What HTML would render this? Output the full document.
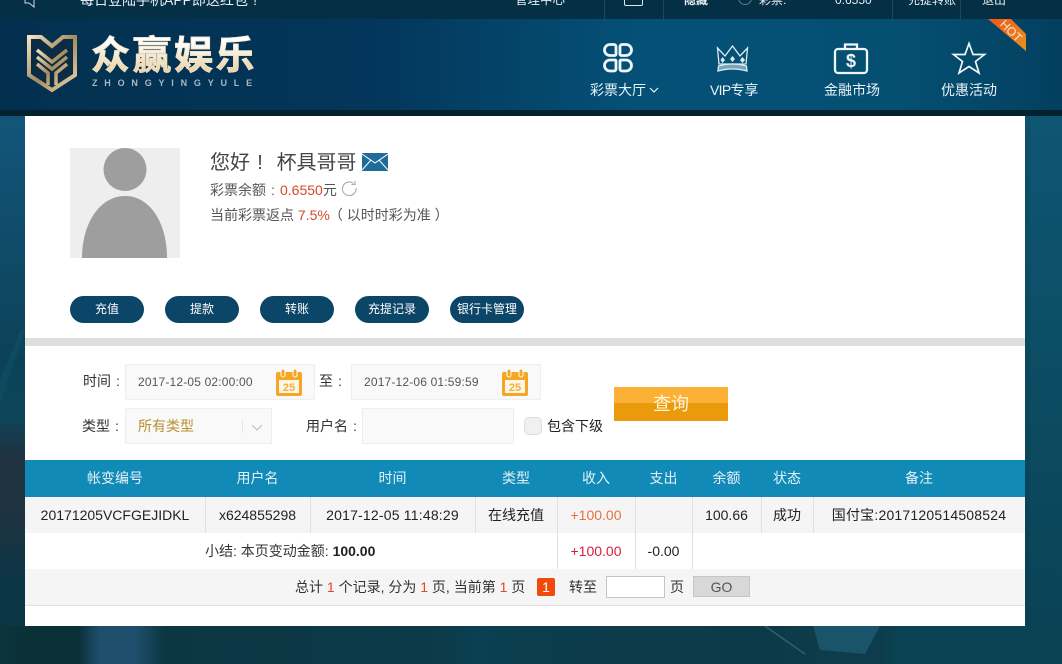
<!DOCTYPE html>
<html lang="zh"><head><meta charset="utf-8"><title>众赢娱乐</title>
<style>
*{box-sizing:border-box}
html,body{margin:0;padding:0;width:1062px;height:664px;overflow:hidden;background:#0a3d4f}
body{position:relative;font-family:"Liberation Sans","Noto Sans CJK SC",sans-serif;font-size:14px;color:#333}
.a{position:absolute;white-space:nowrap}
i.k{font-style:normal;display:inline-block;width:14px;text-align:center}
.btn{position:absolute;top:296px;width:74px;height:27px;border-radius:14px;background:#0b4568;color:#fff;font-size:12px;line-height:27px;text-align:center}
.inp{position:absolute;background:#f9f9f9;border:1px solid #eee}
.cell{position:absolute;text-align:center;white-space:nowrap;font-size:14px;color:#222;line-height:36px}
.th{position:absolute;top:460px;height:37px;line-height:37px;text-align:center;color:#e4f2f8;font-size:14px}
.ln{position:absolute;width:1px;background:#e0e0e0}
.nav{position:absolute;top:81px;color:#eaf4f9;font-size:14px;line-height:18px;text-align:center;white-space:nowrap}
.top{position:absolute;top:-9px;color:#e8eef2;font-size:14px;line-height:18px;white-space:nowrap}
.sep{position:absolute;top:0;width:1px;height:19px;background:#1b4a5f}
.lb{position:absolute;font-size:14px;line-height:18px;color:#333;white-space:nowrap}
</style></head><body>
<!-- background -->
<div class="a" style="left:0;top:116px;width:1062px;height:548px;background:linear-gradient(180deg,#0e5674 0%,#0c4c62 50%,#0a4155 100%)"></div>
<div class="a" style="left:1025px;top:116px;width:5px;height:510px;background:rgba(5,40,55,.12)"></div>
<div class="a" style="left:0;top:116px;width:25px;height:548px;background:linear-gradient(180deg,#13557a 0%,#0c4258 45%,#0d4558 55%,#1f3341 62%,#1f3341 72%,#0c3645 85%,#0b3543 100%)"></div>
<svg class="a" style="left:0;top:330px" width="25" height="130"><path d="M25 0L0 75V50L25 -10Z" fill="#155c72" opacity=".3"/></svg>
<div class="a" style="left:0;top:626px;width:1062px;height:38px;background:linear-gradient(90deg,#0b3540 0,#0a3038 25px,#0a3038 78px,#1f4f6d 100px,#1f4f6d 135px,#0b3742 165px,#0c3a48 430px,#0b3f52 480px,#0b3d4c 530px,#0d3a48 760px,#0d3d4c 880px,#0b4355 900px,#0b4355 1062px)"></div>
<svg class="a" style="left:0;top:626px" width="1062" height="38">
<path d="M813 0H880L865 28L820 24Z" fill="#1e5a72" opacity=".8"/>
<path d="M765 0L805 28" stroke="#2f6266" stroke-width="1.500"/></svg>
<!-- top bar -->
<div class="a" style="left:0;top:0;width:1062px;height:19px;background:#052f45"></div>
<svg class="a" style="left:23px;top:0" width="14" height="8"><path d="M2 0V3H6L11 7V0" fill="none" stroke="#cfd8dd"/></svg>
<div class="top" style="left:80px">每日登陆手机APP即送红包<i class="k">!</i></div>
<div class="top" style="left:515px;font-size:12.500px">管理中心</div>
<div class="sep" style="left:604px"></div><div class="sep" style="left:663px"></div><div class="sep" style="left:892px"></div><div class="sep" style="left:960px"></div>
<div class="a" style="left:624px;top:-9px;width:19px;height:15px;border:1px solid #dfe7eb;border-radius:2px"></div>
<div class="top" style="left:684px;font-weight:bold;font-size:12px">隐藏</div>
<div class="a" style="left:738px;top:-9px;width:14px;height:14px;border:1px solid #557c8c;border-radius:50%"></div>
<div class="top" style="left:759px;font-size:12px">彩票:</div>
<div class="top" style="left:835px;font-size:12px">0.6550</div>
<div class="top" style="left:908px;font-size:12px">充提转账</div>
<div class="top" style="left:982px;font-size:12px">退出</div>
<!-- header -->
<div class="a" style="left:0;top:19px;width:1062px;height:91px;background:linear-gradient(90deg,#03304f 0%,#03365a 35%,#055077 60%,#054f72 85%,#033f5f 100%)"></div>
<div class="a" style="left:0;top:110px;width:1062px;height:6px;background:#04212f"></div>
<!-- logo -->
<svg class="a" style="left:26px;top:34px" width="52" height="60" viewBox="0 0 52 60">
<defs><linearGradient id="g" x1="0" y1="0" x2="1" y2="1"><stop offset="0" stop-color="#f2e3bd"/><stop offset=".5" stop-color="#a58a5c"/><stop offset="1" stop-color="#ead7ae"/></linearGradient></defs>
<path d="M3 3H15L26 12L37 3H49V41L26 56L3 41Z" fill="#0a2c44" stroke="url(#g)" stroke-width="4"/>
<path d="M11 16L26 28L41 16M11 23L26 35L41 23M11 30L22 39V51M41 30L30 39V51" fill="none" stroke="url(#g)" stroke-width="3.500"/>
<path d="M26 35V48" stroke="url(#g)" stroke-width="3"/>
</svg>
<div class="a" style="left:91px;top:32px;font-size:39px;line-height:50px;font-weight:bold;letter-spacing:2.500px;background:linear-gradient(180deg,#fff 20%,#f3e4c8 55%,#e8cfa0 85%);-webkit-background-clip:text;background-clip:text;color:transparent;-webkit-text-stroke:.7px #efe0c4">众赢娱乐</div>
<div class="a" style="left:92px;top:78px;font-size:9px;line-height:11px;letter-spacing:6.800px;color:#a6b8c4;font-weight:bold">ZHONGYINGYULE</div>
<!-- nav icons -->
<svg class="a" style="left:600px;top:40px" width="36" height="36" fill="none" stroke="#eef7fb" stroke-width="2.800"><path d="M10 4.500H14A2 2 0 0 1 16 6.500V14.500A2 2 0 0 1 15 15.500H10A5.500 5.500 0 0 1 10 4.500ZM22 4.500H26A5.500 5.500 0 0 1 26 15.500H21A2 2 0 0 1 20 14.500V6.500A2 2 0 0 1 22 4.500ZM10 20H15A1 1 0 0 1 16 21V29A2 2 0 0 1 14 31H10A5.500 5.500 0 0 1 10 20ZM21 20H26A5.500 5.500 0 0 1 26 31H22A2 2 0 0 1 20 29V21A1 1 0 0 1 21 20Z"/></svg>
<svg class="a" style="left:714px;top:44px" width="38" height="30" fill="none" stroke="#dcecf3" stroke-width="1.300"><path d="M3.500 4L11 12L18.500 2L26 12L33.500 4L32 20H5Z"/><path d="M4.500 22Q18.500 18 32.500 22L33 27Q18.500 23 4 27Z" fill="#dcecf3" fill-opacity=".55"/><path d="M18.500 12L21 15L18.500 18L16 15ZM8.500 13L11 16L8.500 19L6.500 16ZM28.500 13L31 16L28.500 19L26 16Z" fill="#dcecf3" stroke="none"/></svg>
<svg class="a" style="left:828px;top:40px" width="46" height="36" fill="none" stroke="#eef7fb" stroke-width="2.300"><rect x="7" y="9" width="32" height="24" rx="3"/><path d="M17 9V4.500H29V9"/><text x="23" y="27" font-size="18" font-weight="bold" fill="#eef7fb" stroke="none" text-anchor="middle" font-family="Liberation Sans">$</text></svg>
<svg class="a" style="left:950px;top:40px" width="38" height="36" fill="none" stroke="#eef7fb" stroke-width="1.700"><path d="M19 3.500L23 14.500H34.500L25.500 21.500L29 33L19 26.500L9 33L12.500 21.500L3.500 14.500H15Z"/></svg>
<svg class="a" style="left:980px;top:19px" width="50" height="36"><defs><linearGradient id="h" x1="0" y1="0" x2="1" y2="1"><stop offset="0" stop-color="#f0571c"/><stop offset="1" stop-color="#e8931e"/></linearGradient></defs><path d="M8 0H31L46 15V32Z" fill="url(#h)"/><text x="31" y="16" fill="#f6e6cf" font-size="12" font-family="Liberation Sans" text-anchor="middle" transform="rotate(45 31 12)">HOT</text></svg>
<div class="nav" style="left:590px">彩票大厅</div>
<svg class="a" style="left:649px;top:87px" width="10" height="7"><path d="M1 1L5 5L9 1" fill="none" stroke="#eaf4f9" stroke-width="1.200"/></svg>
<div class="nav" style="left:710px"><span style="letter-spacing:-.7px">VIP</span>专享</div>
<div class="nav" style="left:824px">金融市场</div>
<div class="nav" style="left:941px">优惠活动</div>
<!-- white panel -->
<div class="a" style="left:25px;top:116px;width:1000px;height:510px;background:#fff"></div>
<!-- profile -->
<svg class="a" style="left:70px;top:148px" width="110" height="110"><rect width="110" height="110" fill="#eee"/><circle cx="55" cy="21.500" r="21.500" fill="#9e9e9e"/><path d="M12 110C12 75 30 48 55 48C80 48 97 75 97 110Z" fill="#9e9e9e"/></svg>
<div class="a" style="left:210px;top:150px;font-size:20px;line-height:26px;color:#444">您好<i class="k" style="width:20px">!</i> <span style="margin-left:1px">杯具哥哥</span></div>
<svg class="a" style="left:362px;top:153px" width="26" height="18"><rect width="26" height="18" fill="#1f6c9a"/><path d="M0 1L13 10L26 1M0 17L9 7M26 17L17 7" fill="none" stroke="#fff" stroke-width="1"/></svg>
<div class="a" style="left:210px;top:181px;font-size:14px;line-height:18px;color:#555">彩票余额<i class="k">:</i><span style="color:#d9482b">0.6550</span>元</div>
<svg class="a" style="left:341px;top:180px" width="16" height="16"><path d="M12.500 3.500A6.800 6.800 0 1 0 15 8M14 1V4.500H10.500" fill="none" stroke="#aaa" stroke-width="1.100"/></svg>
<div class="a" style="left:210px;top:206px;font-size:14px;line-height:18px;color:#555">当前彩票返点 <span style="color:#d9482b">7.5%</span><span style="margin-left:-1px">（ 以时时彩为准 ）</span></div>
<div class="btn" style="left:70px">充值</div><div class="btn" style="left:165px">提款</div><div class="btn" style="left:260px">转账</div><div class="btn" style="left:355px">充提记录</div><div class="btn" style="left:450px">银行卡管理</div>
<div class="a" style="left:25px;top:338px;width:1000px;height:8px;background:#dedede"></div>
<!-- search -->
<div class="lb" style="left:83px;top:372px">时间<i class="k">:</i></div>
<div class="inp" style="left:125px;top:364px;width:190px;height:36px"></div>
<div class="a" style="left:138px;top:374px;font-size:12px;letter-spacing:.17px;line-height:17px;color:#555">2017-12-05 02:00:00</div>
<svg class="a" style="left:275px;top:368px" width="28" height="28"><rect x="1" y="4" width="26" height="24" rx="2" fill="#f5a623"/><rect x="4" y="12" width="20" height="13" fill="#fdf6e6"/><rect x="6" y="1" width="4" height="8" rx="2" fill="#f5a623" stroke="#fff"/><rect x="18" y="1" width="4" height="8" rx="2" fill="#f5a623" stroke="#fff"/><text x="14" y="23" font-size="11" font-weight="bold" fill="#f5b040" text-anchor="middle" font-family="Liberation Sans">25</text></svg>
<div class="lb" style="left:319px;top:372px">至<i class="k">:</i></div>
<div class="inp" style="left:351px;top:364px;width:190px;height:36px"></div>
<div class="a" style="left:364px;top:374px;font-size:12px;letter-spacing:.17px;line-height:17px;color:#555">2017-12-06 01:59:59</div>
<svg class="a" style="left:501px;top:368px" width="28" height="28"><rect x="1" y="4" width="26" height="24" rx="2" fill="#f5a623"/><rect x="4" y="12" width="20" height="13" fill="#fdf6e6"/><rect x="6" y="1" width="4" height="8" rx="2" fill="#f5a623" stroke="#fff"/><rect x="18" y="1" width="4" height="8" rx="2" fill="#f5a623" stroke="#fff"/><text x="14" y="23" font-size="11" font-weight="bold" fill="#f5b040" text-anchor="middle" font-family="Liberation Sans">25</text></svg>
<div class="lb" style="left:82px;top:417px">类型<i class="k">:</i></div>
<div class="inp" style="left:125px;top:408px;width:147px;height:36px"></div>
<div class="lb" style="left:138px;top:417px;color:#b8902f">所有类型</div>
<div class="a" style="left:242px;top:420px;width:1px;height:13px;background:#e5e5e5"></div>
<svg class="a" style="left:251px;top:424px" width="12" height="8"><path d="M1 1L6 6L11 1" fill="none" stroke="#bbb"/></svg>
<div class="lb" style="left:306px;top:417px">用户名<i class="k">:</i></div>
<div class="inp" style="left:362px;top:408px;width:152px;height:36px"></div>
<div class="a" style="left:524px;top:417px;width:18px;height:18px;border:1px solid #ddd;border-radius:5px;background:#f0f0f0"></div>
<div class="lb" style="left:547px;top:417px;color:#222">包含下级</div>
<div class="a" style="left:614px;top:387px;width:114px;height:34px;background:linear-gradient(180deg,#fbb136 0,#fbb136 16px,#ea9a0a 16px,#ea9a0a 100%);color:#fff6dd;font-size:18px;line-height:34px;text-align:center">查询</div>
<!-- table -->
<div class="a" style="left:25px;top:460px;width:1000px;height:37px;background:#128ab8"></div>
<div class="th" style="left:25px;width:180px">帐变编号</div>
<div class="th" style="left:205px;width:105px">用户名</div>
<div class="th" style="left:310px;width:165px">时间</div>
<div class="th" style="left:475px;width:82px">类型</div>
<div class="th" style="left:557px;width:78px">收入</div>
<div class="th" style="left:635px;width:57px">支出</div>
<div class="th" style="left:692px;width:69px">余额</div>
<div class="th" style="left:761px;width:52px">状态</div>
<div class="th" style="left:813px;width:212px">备注</div>
<div class="a" style="left:25px;top:497px;width:1000px;height:36px;background:#f5f5f5"></div>
<div class="ln" style="left:205px;top:497px;height:36px"></div><div class="ln" style="left:310px;top:497px;height:36px"></div><div class="ln" style="left:475px;top:497px;height:36px"></div><div class="ln" style="left:557px;top:497px;height:72px"></div><div class="ln" style="left:635px;top:497px;height:72px"></div><div class="ln" style="left:692px;top:497px;height:72px"></div><div class="ln" style="left:761px;top:497px;height:36px"></div><div class="ln" style="left:813px;top:497px;height:36px"></div>
<div class="cell" style="left:25px;top:497px;width:180px">20171205VCFGEJIDKL</div>
<div class="cell" style="left:205px;top:497px;width:105px">x624855298</div>
<div class="cell" style="left:310px;top:497px;width:165px;letter-spacing:.2px">2017-12-05 11:48:29</div>
<div class="cell" style="left:475px;top:497px;width:82px">在线充值</div>
<div class="cell" style="left:557px;top:497px;width:78px;color:#e8703f">+100.00</div>
<div class="cell" style="left:692px;top:497px;width:69px">100.66</div>
<div class="cell" style="left:761px;top:497px;width:52px">成功</div>
<div class="cell" style="left:813px;top:497px;width:212px;letter-spacing:.2px">国付宝:2017120514508524</div>
<div class="a" style="left:205px;top:533px;font-size:14px;line-height:36px;color:#333">小结: 本页变动金额: <b style="color:#222">100.00</b></div>
<div class="cell" style="left:557px;top:533px;width:78px;color:#d5203f">+100.00</div>
<div class="cell" style="left:635px;top:533px;width:57px">-0.00</div>
<div class="a" style="left:25px;top:569px;width:1000px;height:37px;background:#f5f5f5;border-bottom:1px solid #e2e2e2"></div>
<div class="lb" style="left:295px;top:578px">总计 <span style="color:#e0492a">1</span> 个记录, 分为 <span style="color:#e0492a">1</span> 页, 当前第 <span style="color:#e0492a">1</span> 页</div>
<div class="a" style="left:537px;top:578px;width:18px;height:18px;background:#f04a0d;color:#fff;font-size:14px;line-height:18px;text-align:center;border-radius:2px">1</div>
<div class="lb" style="left:569px;top:578px">转至</div>
<div class="a" style="left:606px;top:576px;width:59px;height:22px;background:#fff;border:1px solid #c4c4c4"></div>
<div class="lb" style="left:670px;top:578px">页</div>
<div class="a" style="left:693px;top:576px;width:57px;height:21px;background:#d8d8d8;border:1px solid #c6c6c6;font-size:14px;line-height:20px;text-align:center;color:#555">GO</div>
</body></html>
